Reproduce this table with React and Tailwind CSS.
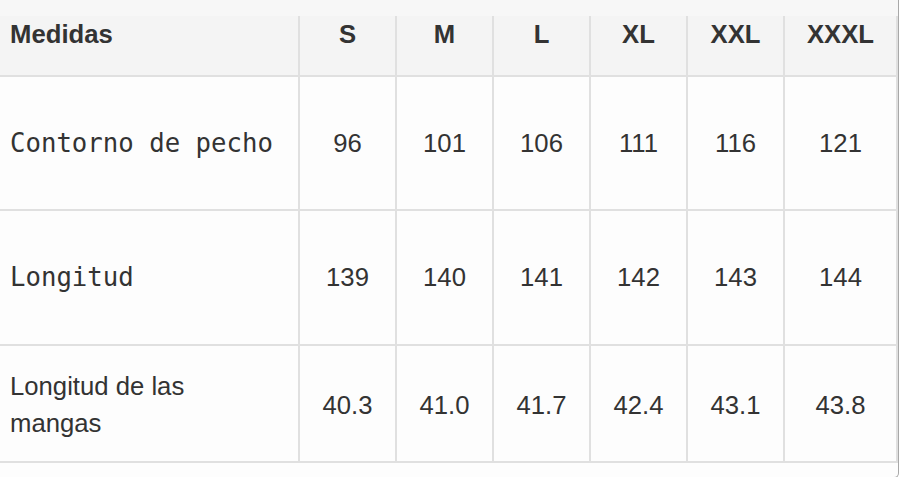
import React from "react";

const sizes = ["S", "M", "L", "XL", "XXL", "XXXL"];

const rows = [
  { label: "Contorno de pecho", mono: true, height: "h-[134px]", values: ["96", "101", "106", "111", "116", "121"] },
  { label: "Longitud", mono: true, height: "h-[135px]", values: ["139", "140", "141", "142", "143", "144"] },
  { label: "Longitud de las mangas", mono: false, height: "h-[117px] pt-[3px]", values: ["40.3", "41.0", "41.7", "42.4", "43.1", "43.8"] },
];

const App = () => {
  return (
    <div className="w-[900px] h-[477px] overflow-hidden bg-white">
      <div className="w-[899px] h-[478px] border-r border-b border-[#a8a8a8] rounded-br-[5px] bg-[#fdfdfd] text-[#333] font-['Liberation_Sans',Arial,sans-serif] text-[25.7px] leading-[37px]">
        {/* strip left from the row above */}
        <div className="h-[16px] bg-[#f7f7f7]"></div>

        <div className="w-[898px] grid grid-cols-[300px_97px_97px_97px_97px_97px_1fr]">
          {/* Header */}
          <div className="h-[61px] bg-[#f4f4f4] border-r-2 border-b-2 border-[#e0e0e0] pl-[10px] font-bold">
            Medidas
          </div>
          {sizes.map((s) => (
            <div
              key={s}
              className="h-[61px] bg-[#f4f4f4] border-r-2 border-b-2 border-[#e0e0e0] text-center font-bold"
            >
              {s}
            </div>
          ))}

          {/* Body */}
          {rows.map((row) => (
            <React.Fragment key={row.label}>
              <div
                className={`${row.height} border-r-2 border-b-2 border-[#e0e0e0] pl-[10px] pr-[30px] flex items-center ${
                  row.mono ? "font-['DejaVu_Sans_Mono',monospace] whitespace-nowrap" : ""
                }`}
              >
                {row.label}
              </div>
              {row.values.map((v, i) => (
                <div
                  key={i}
                  className={`${row.height} border-r-2 border-b-2 border-[#e0e0e0] flex items-center justify-center`}
                >
                  {v}
                </div>
              ))}
            </React.Fragment>
          ))}
        </div>
      </div>
    </div>
  );
};

export default App;
